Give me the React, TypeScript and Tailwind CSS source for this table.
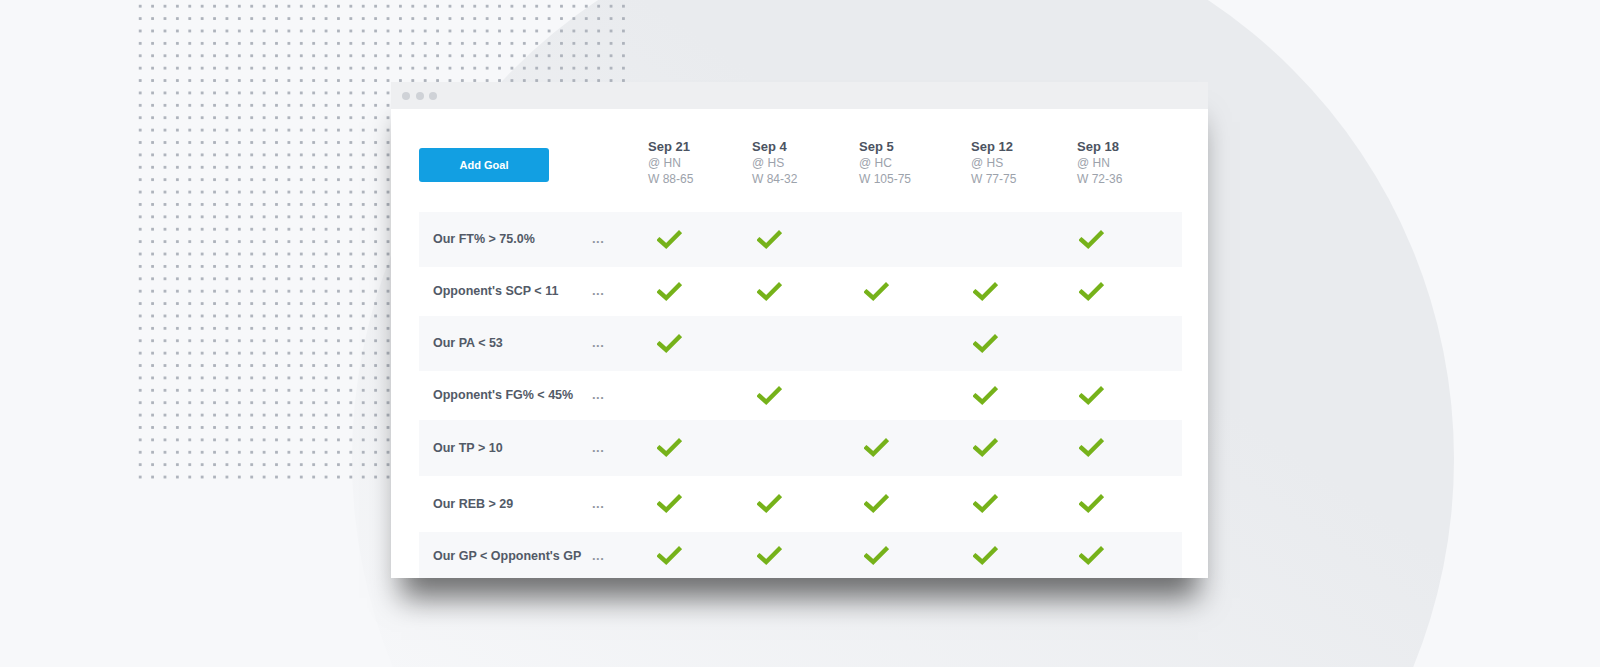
const columns = [
  { date: "Sep 21", at: "@ HN", score: "W 88-65", w: "w-[104px]", check: "ml-[9px]" },
  { date: "Sep 4", at: "@ HS", score: "W 84-32", w: "w-[107px]", check: "ml-[5px]" },
  { date: "Sep 5", at: "@ HC", score: "W 105-75", w: "w-[112px]", check: "ml-[5px]" },
  { date: "Sep 12", at: "@ HS", score: "W 77-75", w: "w-[106px]", check: "ml-[2px]" },
  { date: "Sep 18", at: "@ HN", score: "W 72-36", w: "w-[105px]", check: "ml-[2px]" },
];

const goals = [
  { label: "Our FT% > 75.0%", hits: [1, 1, 0, 0, 1], h: "h-[55px]", gray: true },
  { label: "Opponent's SCP < 11", hits: [1, 1, 1, 1, 1], h: "h-[49px]", gray: false },
  { label: "Our PA < 53", hits: [1, 0, 0, 1, 0], h: "h-[55px]", gray: true },
  { label: "Opponent's FG% < 45%", hits: [0, 1, 0, 1, 1], h: "h-[49px]", gray: false },
  { label: "Our TP > 10", hits: [1, 0, 1, 1, 1], h: "h-[56px]", gray: true },
  { label: "Our REB > 29", hits: [1, 1, 1, 1, 1], h: "h-[56px]", gray: false },
  { label: "Our GP < Opponent's GP", hits: [1, 1, 1, 1, 1], h: "h-[48px]", gray: true },
];

function Check() {
  return (
    <svg width="25" height="20" viewBox="0 0 25 20" fill="none">
      <path
        d="M2.5 10 L9.2 16 L22 3.2"
        stroke="#76b21a"
        strokeWidth="4.4"
        strokeLinecap="square"
        strokeLinejoin="miter"
      />
    </svg>
  );
}

function Window() {
  return (
    <div className="relative ml-[391px] mt-[82px] w-[817px] h-[496px] bg-white overflow-hidden shadow-[0_30px_28px_-10px_rgba(0,0,0,0.55)]">
      {/* title bar */}
      <div className="h-[27px] bg-[#eeeff1] flex items-center pl-[11px] gap-[5.5px]">
        <span className="w-2 h-2 rounded-full bg-[#cfd2d7]" />
        <span className="w-2 h-2 rounded-full bg-[#cfd2d7]" />
        <span className="w-2 h-2 rounded-full bg-[#cfd2d7]" />
      </div>

      <div className="pl-[28px] pr-[26px]">
        {/* header */}
        <div className="flex h-[103px]">
          <div className="w-[229px] pt-[39px]">
            <button className="w-[130px] h-[34px] rounded-[3px] bg-[#129fe2] text-white text-[11px] font-bold">
              Add Goal
            </button>
          </div>
          {columns.map((c) => (
            <div key={c.date} className={`${c.w} pt-[30px] text-[12px] leading-[16px]`}>
              <div className="text-[13px] font-bold text-[#4b5361]">{c.date}</div>
              <div className="text-[#9ca2ab]">{c.at}</div>
              <div className="text-[#9ca2ab]">{c.score}</div>
            </div>
          ))}
        </div>

        {/* goal rows */}
        {goals.map((g) => (
          <div
            key={g.label}
            className={`flex items-center ${g.h} ${g.gray ? "bg-[#f7f8fa]" : "bg-white"}`}
          >
            <div className="w-[173px] pl-[14px] text-[12.5px] font-bold text-[#525a67] whitespace-nowrap">
              {g.label}
            </div>
            <div className="w-[56px] text-[13px] font-bold text-[#8f96a0] leading-none -mt-[2px] tracking-[0.5px]">...</div>
            {columns.map((c, i) => (
              <div key={c.date} className={`${c.w} flex items-center`}>
                {g.hits[i] ? (
                  <div className={c.check}>
                    <Check />
                  </div>
                ) : null}
              </div>
            ))}
          </div>
        ))}
      </div>
    </div>
  );
}

export default function App() {
  return (
    <div className="relative w-[1600px] h-[667px] overflow-hidden bg-[#f7f8fa] font-['Liberation_Sans',Arial,sans-serif]">
      {/* background circle */}
      <div className="absolute left-[352px] top-[-92px] w-[1102px] h-[1102px] rounded-full bg-[linear-gradient(215deg,#e9ebee_35%,#f7f8fa_85%)]" />
      {/* dot grid */}
      <div className="absolute left-[134px] top-[-0.5px] w-[496px] h-[484px] bg-[radial-gradient(circle,#aeb3bc_1.3px,transparent_1.8px)] bg-[length:12.4px_12.4px]" />
      <div className="relative pt-px -mt-px">
        <Window />
      </div>
    </div>
  );
}
